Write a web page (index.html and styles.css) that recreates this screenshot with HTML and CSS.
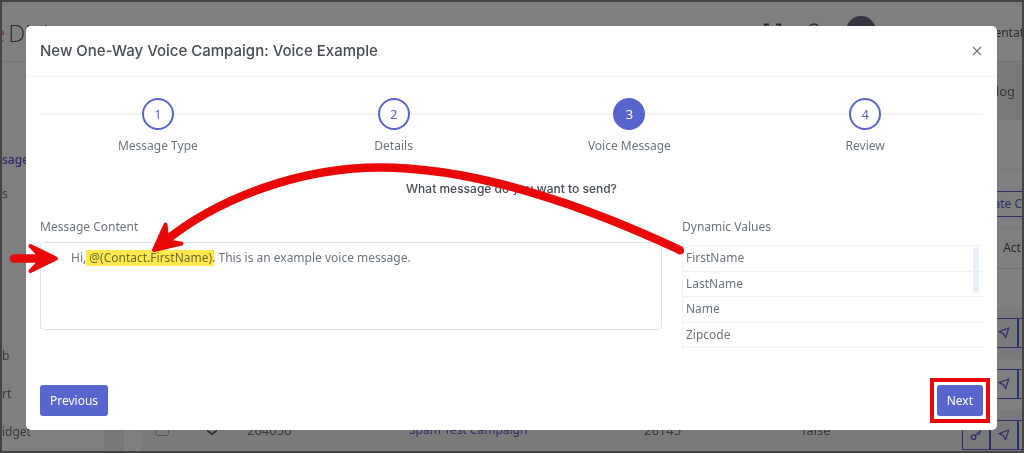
FILE: index.html
```html
<!DOCTYPE html>
<html lang="en">
<head>
<meta charset="utf-8">
<title>New One-Way Voice Campaign</title>
<link rel="stylesheet" href="styles.css">
</head>
<body>
<svg class="sprite" aria-hidden="true">
  <symbol id="send" viewBox="0 0 12 12"><path d="M1 4.600 10.800 1 7.600 10.800 5.400 6.600Z" fill="none" stroke="currentColor" stroke-width="1.300" stroke-linejoin="round"/></symbol>
  <symbol id="key" viewBox="0 0 12 12"><circle cx="3.600" cy="8.200" r="2.300" fill="none" stroke="currentColor" stroke-width="1.300"/><path d="M5.300 6.500 10.800 1.600M8.200 4l1.700 1.800M9.800 2.500l1 1" fill="none" stroke="currentColor" stroke-width="1.300"/></symbol>
</svg>
<div class="page" aria-hidden="true">
  <header class="topbar">
    <div class="logo"><span class="logo-e">e</span>Digi</div>
    <div class="tools">
      <svg class="tool" viewBox="0 0 18 18"><path d="M1 6V1.500H5M12 1.500H16V6" fill="none" stroke="currentColor" stroke-width="2"/></svg>
      <svg class="tool" viewBox="0 0 18 18"><circle cx="9" cy="6" r="5" fill="none" stroke="currentColor" stroke-width="1.500"/></svg>
      <span class="avatar"></span>
      <span class="doc">entat</span>
    </div>
  </header>
  <div class="shell">
    <nav class="side">
      <div class="side-group">
        <span class="current">sages</span>
        <span>s</span>
      </div>
      <div class="side-group lower">
        <span>b</span>
        <span>rt</span>
        <span>idget</span>
      </div>
    </nav>
    <div class="gutter"></div>
    <main class="main">
      <div class="crumbs">log</div>
      <div class="panel">
        <div class="panel-head"></div>
        <div class="panel-tools"><span class="create">ate C</span></div>
        <div class="head-row">Acti</div>
        <div class="filter-row"></div>
        <div class="row odd"><span class="acts"><i class="act"><svg><use href="#key"/></svg></i><i class="act"><svg><use href="#send"/></svg></i><i class="act"></i></span></div>
        <div class="row"><span class="acts"><i class="act"><svg><use href="#key"/></svg></i><i class="act"><svg><use href="#send"/></svg></i><i class="act"></i></span></div>
        <div class="row odd">
          <span class="check"></span>
          <svg class="bubble" viewBox="0 0 14 14"><path d="M5 11.500A5.500 5.500 0 1 1 9 11.500L7 13.500Z" fill="none" stroke="currentColor" stroke-width="1.500"/></svg>
          <span class="num">264050</span><span class="camp">Spam Test Campaign</span><span class="num2">26145</span><span class="flag">false</span>
          <span class="acts"><i class="act"><svg><use href="#key"/></svg></i><i class="act"><svg><use href="#send"/></svg></i><i class="act"></i></span>
        </div>
      </div>
    </main>
  </div>
</div>
<div class="backdrop">
  <section class="modal" role="dialog" aria-labelledby="dialog-title">
    <header class="modal-head">
      <h1 id="dialog-title">New One-Way Voice Campaign: Voice Example</h1>
      <button class="close" type="button" aria-label="Close"><svg viewBox="0 0 12 12"><path d="M2 2 10 10M10 2 2 10" fill="none" stroke="currentColor" stroke-width="1.300"/></svg></button>
    </header>
    <div class="modal-body">
      <ol class="steps">
        <li class="step"><span class="dot">1</span>Message Type</li>
        <li class="step"><span class="dot">2</span>Details</li>
        <li class="step"><span class="dot active">3</span>Voice Message</li>
        <li class="step"><span class="dot">4</span>Review</li>
      </ol>
      <h2>What message do you want to send?</h2>
      <div class="fields">
        <div class="content">
          <label for="message">Message Content</label>
          <textarea id="message" spellcheck="false">Hi, @(Contact.FirstName). This is an example voice message.</textarea>
        </div>
        <div class="values">
          <span>Dynamic Values</span>
          <ul class="list">
            <li>FirstName</li><li>LastName</li><li>Name</li><li>Zipcode</li>
          </ul>
          <span class="thumb"></span>
        </div>
      </div>
      <footer class="actions">
        <button class="btn" type="button">Previous</button>
        <button class="btn next" type="button">Next</button>
      </footer>
    </div>
  </section>
</div>
<svg class="marks multiply" viewBox="0 0 1024 453" aria-hidden="true">
  <rect x="86" y="250" width="128" height="16" fill="#ffe94f"/>
</svg>
<svg class="marks" viewBox="0 0 1024 453" aria-hidden="true">
  <g fill="none" stroke="#ea0707" stroke-linecap="round" stroke-linejoin="round">
    <path stroke-width="8.500" stroke-linecap="butt" d="M681 250.500C590 208 480 167.500 380 167.500 300 167.500 218 198 164 242"/>
    <path stroke-width="4" fill="#ea0707" d="M154 250 165.500 224.500 167 237 171 242 181.500 243.500Z"/>
    <path stroke-width="8.500" d="M14 258.500H46"/>
    <path stroke-width="4" fill="#ea0707" d="M56 258.500 30.500 246 39 255V262L30.500 271Z"/>
  </g>
  <circle cx="680" cy="250.500" r="4" fill="#ea0707"/>
</svg>
</body>
</html>
```
FILE: styles.css
```css
* { box-sizing: border-box; }
body { margin: 0; height: 100vh; overflow: hidden; position: relative; background: #fff; color: #6c757d; font: 12px/18px "Noto Sans", sans-serif; }
h1, h2, ol, ul { margin: 0; padding: 0; list-style: none; }
button, textarea { font: inherit; }
.sprite { position: absolute; width: 0; height: 0; }

.page { display: flex; flex-direction: column; height: 100%; overflow: hidden; font-size: 12px; }
.topbar { display: flex; justify-content: space-between; flex: none; height: 62px; border-bottom: 1px solid #e6e6e6; }
.logo { margin: 16px 0 0 -8px; color: #555; font: 300 24px/34px "Open Sans", sans-serif; white-space: nowrap; }
.logo-e { color: #ff5a36; margin-right: 3px; }
.tools { display: flex; flex: none; width: 260px; padding-top: 16px; color: #50566a; }
.tool { flex: none; width: 18px; height: 18px; margin: 7px 23px 0 0; }
.avatar { flex: none; width: 30px; height: 30px; border-radius: 50%; background: #6b6b80; }
.doc { flex: 1; padding: 8px 0 0; text-align: right; }
.shell { display: flex; flex: 1; min-height: 0; }
.side { width: 104px; padding: 89px 0 0 2px; }
.side-group { display: flex; flex-direction: column; gap: 16px; }
.lower { gap: 20px; margin-top: 144px; }
.current { color: #4c55c8; font-weight: 500; }
.gutter { width: 20px; background: #eef0f6; }
.main { flex: 1; min-width: 0; }
.crumbs { height: 58px; padding: 20px 9px 0 0; background: #f1f3f7; font-size: 13px; text-align: right; }
.panel { margin-left: 17px; }
.panel-head { height: 50px; border-bottom: 1px solid #eee; }
.panel-tools { display: flex; justify-content: flex-end; align-items: center; height: 58px; padding-top: 10px; border-bottom: 1px solid #eee; }
.create { padding: 3px 2px 3px 34px; border: solid #5864cc; border-width: 1px 0; color: #5864cc; }
.head-row { height: 41px; padding: 11px 0; border-bottom: 1px solid #e4e4e4; color: #555; font-size: 12px; text-align: right; }
.filter-row { height: 39px; }
.row { display: flex; align-items: flex-start; height: 51px; padding-top: 10px; overflow: hidden; font-size: 13px; line-height: 20px; }
.odd { background: #f4f4f4; }
.check { flex: none; width: 14px; height: 14px; margin: 2px 0 0 14px; border: 1px solid #aaa; border-radius: 3px; }
.bubble { flex: none; width: 14px; height: 14px; margin: 1px 0 0 36px; color: #555; }
.num { width: 162px; margin-left: 28px; }
.camp { width: 235px; color: #5864cc; font-size: 12px; }
.num2 { width: 158px; }
.acts { display: flex; margin: 0 -22px 0 auto; color: #5864cc; }
.act { display: flex; align-items: center; justify-content: center; width: 28px; height: 30px; border: 1px solid #5864cc; }
.act svg { width: 12px; height: 12px; }

.backdrop { position: absolute; inset: 0; padding: 24px 25px 21px 24px; background: rgba(0,0,0,.5); border: 2px solid #444; }
.modal { display: flex; flex-direction: column; height: 100%; border-radius: 5px; background: #fff; }
.modal-head { display: flex; align-items: center; justify-content: space-between; flex: none; height: 51px; padding: 0 14px; border-bottom: 1px solid #f3f5f5; }
h1 { color: #474d56; font: 500 15px/24px Inter, sans-serif; }
.close { display: flex; padding: 0; border: 0; background: none; color: #777; }
.close svg { width: 12px; height: 12px; }
.modal-body { display: flex; flex-direction: column; flex: 1; padding: 21px 14px 14px; }
.steps { display: grid; grid-template-columns: repeat(4, 1fr); background: linear-gradient(#f0f5f5, #f0f5f5) 0 15px / 100% 2px no-repeat; }
.step { display: flex; flex-direction: column; align-items: center; gap: 7px; }
.dot { display: flex; align-items: center; justify-content: center; width: 32px; height: 32px; border: 2px solid #5965ce; border-radius: 50%; background: #fff; color: #5965ce; font-size: 13px; }
.dot.active { background: #5965ce; color: #fff; }
h2 { margin-top: 25px; color: #474d56; font: 500 12px/18px Inter, sans-serif; text-align: center; }
.fields { display: grid; grid-template-columns: minmax(0, 622fr) minmax(0, 301fr); gap: 20px; margin-top: 20px; }
.content, .values { display: flex; flex-direction: column; position: relative; }
textarea { height: 88px; margin-top: 6px; padding: 6px 30px; border: 1px solid #dee2e6; border-radius: 4px; resize: none; outline: 0; background: #fff; color: #6c757d; }
.list { display: flex; flex-direction: column; height: 103px; margin-top: 9px; border: solid #eef1f8; border-width: 1px 0 0 1px; }
.list li { display: flex; flex: 1; align-items: center; padding: 0 3px; border-bottom: 1px solid #eef1f8; }
.thumb { position: absolute; right: 4px; top: 29px; width: 6px; height: 46px; border-radius: 3px; background: #ebeffb; }
.actions { display: flex; justify-content: space-between; margin-top: auto; }
.btn { height: 31px; padding: 0 10px; border: 0; border-radius: 3px; background: #5965ce; color: #fff; }
.next { position: relative; }
.next::after { content: ""; position: absolute; inset: -7px; border: 4px solid #ea0707; }
.marks { position: absolute; left: 0; top: 0; width: 1024px; height: 453px; pointer-events: none; }
.multiply { mix-blend-mode: multiply; }
```
